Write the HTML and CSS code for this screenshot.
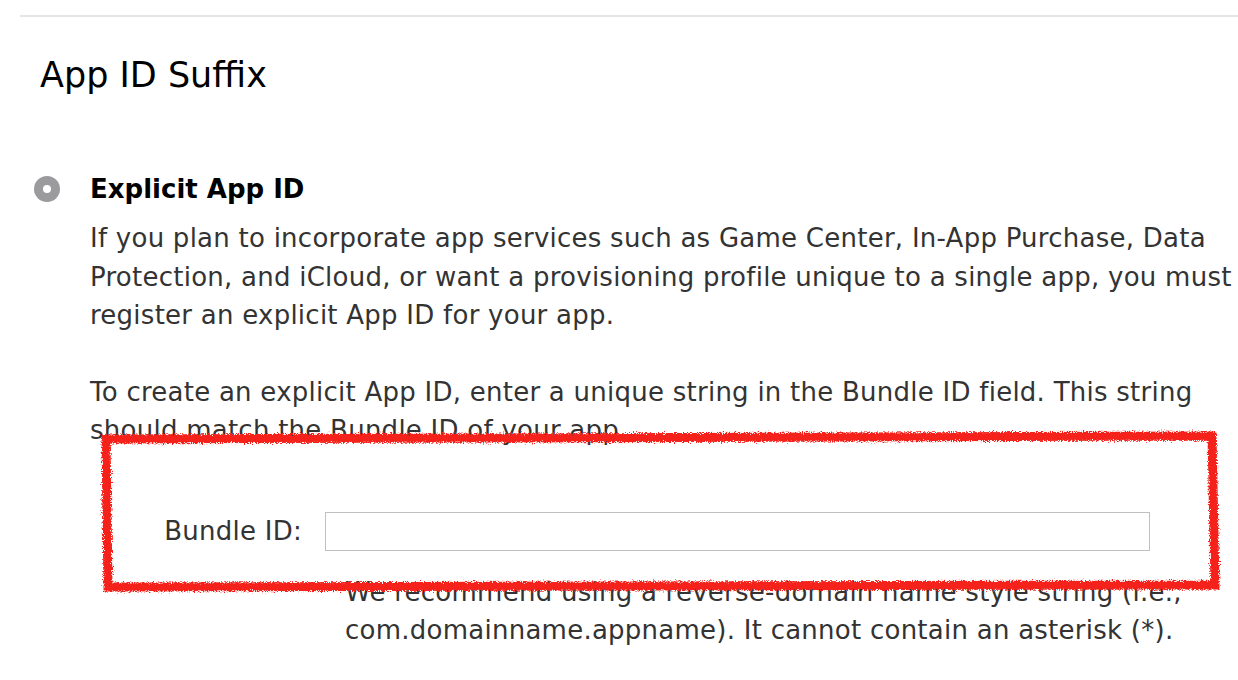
FILE: index.html
```html
<!DOCTYPE html>
<html>
<head>
<meta charset="utf-8">
<link rel="stylesheet" href="styles.css">
</head>
<body>
<div class="page">
  <hr class="rule">
  <h2 class="title">App ID Suffix</h2>
  <div class="option">
    <span class="radio"><span class="dot"></span></span>
    <div class="option-body">
      <h3 class="option-title">Explicit App ID</h3>
      <p class="para">If you plan to incorporate app services such as Game Center, In-App Purchase, Data Protection, and iCloud, or want a provisioning profile unique to a single app, you must register an explicit App ID for your app.</p>
      <p class="para para2">To create an explicit App ID, enter a unique string in the Bundle ID field. This string should match the Bundle ID of your app.</p>
      <div class="field">
        <label class="label">Bundle ID:</label>
        <input class="input" type="text">
      </div>
      <p class="help">We recommend using a reverse-domain name style string (i.e., com.domainname.appname). It cannot contain an asterisk (*).</p>
    </div>
  </div>
  <svg class="mark" width="1140" height="180" viewBox="0 0 1140 180">
    <defs>
      <filter id="rough" x="-5%" y="-10%" width="110%" height="120%">
        <feTurbulence type="fractalNoise" baseFrequency="0.9" numOctaves="2" seed="3" result="n"/>
        <feDisplacementMap in="SourceGraphic" in2="n" scale="6" xChannelSelector="R" yChannelSelector="G"/>
      </filter>
    </defs>
    <path d="M8 11 L1114 8 L1117 157 L10 159 Z" fill="none" stroke="#f5241c" stroke-width="9" stroke-linejoin="miter" filter="url(#rough)"/>
  </svg>
</div>
</body>
</html>
```
FILE: styles.css
```css
html, body {
  margin: 0;
  padding: 0;
  background: #fff;
}
.page {
  position: relative;
  width: 1238px;
  height: 680px;
  overflow: hidden;
  font-family: "DejaVu Sans", sans-serif;
  color: #333;
}
.rule {
  margin: 15px 0 0 20px;
  border: 0;
  border-top: 2px solid #e5e5e5;
  height: 0;
}
.title {
  margin: 38px 0 0 40px;
  font-size: 35px;
  font-weight: normal;
  color: #000;
  line-height: 40px;
}
.option {
  display: flex;
  margin: 80px 0 0 34px;
}
.radio {
  flex: none;
  width: 26px;
  height: 26px;
  border-radius: 50%;
  background: #9b9b9d;
  display: flex;
  align-items: center;
  justify-content: center;
  margin-top: 1px;
}
.dot {
  width: 8px;
  height: 8px;
  border-radius: 50%;
  background: #fff;
}
.option-body {
  margin-left: 30px;
}
.option-title {
  margin: 0;
  font-size: 26px;
  font-weight: bold;
  color: #000;
  line-height: 28px;
}
.para {
  margin: 16px 0 0 0;
  font-size: 26px;
  letter-spacing: 0.25px;
  line-height: 38.5px;
  width: 1146px;
}
.para2 {
  margin-top: 38px;
}
.field {
  display: flex;
  align-items: center;
  margin-top: 62px;
}
.label {
  width: 212px;
  text-align: right;
  font-size: 26px;
  letter-spacing: 0.25px;
  color: #333;
}
.input {
  margin-left: 23px;
  width: 825px;
  height: 39px;
  box-sizing: border-box;
  border: 1px solid #c0c0c0;
  padding: 0;
}
.help {
  margin: 22px 0 0 255px;
  font-size: 26px;
  letter-spacing: 0.25px;
  line-height: 38.5px;
  width: 885px;
}
.mark {
  position: absolute;
  left: 98px;
  top: 428px;
}
```
